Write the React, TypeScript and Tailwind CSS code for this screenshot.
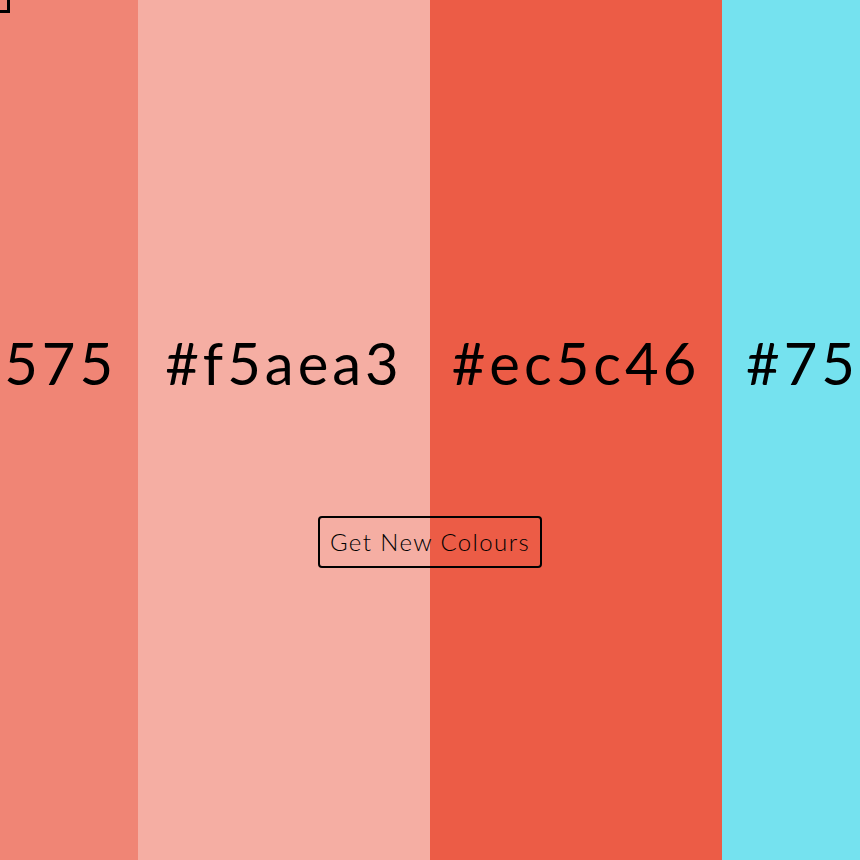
import React from "react";

const colours = ["#f08575", "#f5aea3", "#ec5c46", "#75e2ef"];

export default function App() {
  return (
    <div className="relative h-[860px] w-[860px] overflow-hidden" style={{ fontFamily: "Lato, 'Noto Sans', sans-serif" }}>
      <div className="flex h-full justify-center">
        {colours.map((c) => (
          <div
            key={c}
            className="flex h-full w-[292px] shrink-0 flex-col items-center justify-center pb-[134px]"
            style={{ backgroundColor: c }}
          >
            <span className="text-[58px] leading-none tracking-[4px] text-black">{c}</span>
          </div>
        ))}
      </div>
      <div className="absolute left-0 top-0 h-[13px] w-[10px] border-b-[3px] border-r-[3px] border-black" />
      <div className="absolute inset-x-0 top-[516px] flex justify-center">
        <button className="h-[52px] rounded-[4px] border-2 border-black bg-transparent px-[10px] text-[24px] font-light tracking-[1.4px] text-black">
          Get New Colours
        </button>
      </div>
    </div>
  );
}
